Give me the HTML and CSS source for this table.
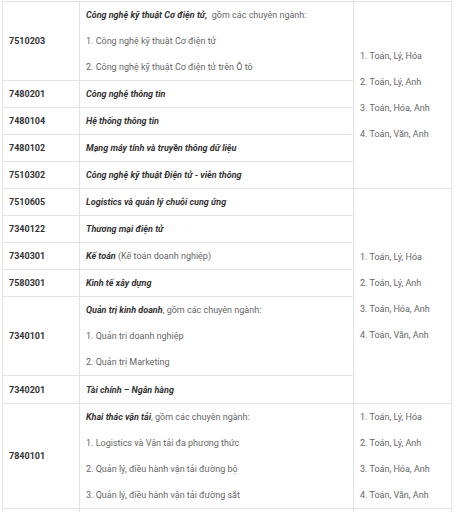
FILE: index.html
```html
<!DOCTYPE html>
<html lang="vi">
<head>
<meta charset="utf-8">
<link rel="stylesheet" href="styles.css">
</head>
<body>
<div class="table">
  <div class="cell c1 code">7510203</div>
  <div class="cell c2">
    <p><b>Công nghệ kỹ thuật Cơ điện tử,</b>&nbsp; gồm các chuyên ngành:</p>
    <p>1. Công nghệ kỹ thuật Cơ điện tử</p>
    <p>2. Công nghệ kỹ thuật Cơ điện tử trên Ô tô</p>
  </div>
  <div class="cell c3 span5">
    <p>1. Toán, Lý, Hóa</p>
    <p>2. Toán, Lý, Anh</p>
    <p>3. Toán, Hóa, Anh</p>
    <p>4. Toán, Văn, Anh</p>
  </div>
  <div class="cell c1 code">7480201</div>
  <div class="cell c2"><p><b>Công nghệ thông tin</b></p></div>
  <div class="cell c1 code">7480104</div>
  <div class="cell c2"><p><b>Hệ thống thông tin</b></p></div>
  <div class="cell c1 code">7480102</div>
  <div class="cell c2"><p><b>Mạng máy tính và truyền thông dữ liệu</b></p></div>
  <div class="cell c1 code">7510302</div>
  <div class="cell c2"><p><b>Công nghệ kỹ thuật Điện tử - viễn thông</b></p></div>

  <div class="cell c1 code">7510605</div>
  <div class="cell c2"><p><b>Logistics và quản lý chuỗi cung ứng</b></p></div>
  <div class="cell c3 span6">
    <p>1. Toán, Lý, Hóa</p>
    <p>2. Toán, Lý, Anh</p>
    <p>3. Toán, Hóa, Anh</p>
    <p>4. Toán, Văn, Anh</p>
  </div>
  <div class="cell c1 code">7340122</div>
  <div class="cell c2"><p><b>Thương mại điện tử</b></p></div>
  <div class="cell c1 code">7340301</div>
  <div class="cell c2"><p><b>Kế toán</b> (Kế toán doanh nghiệp)</p></div>
  <div class="cell c1 code">7580301</div>
  <div class="cell c2"><p><b>Kinh tế xây dựng</b></p></div>
  <div class="cell c1 code">7340101</div>
  <div class="cell c2">
    <p><b>Quản trị kinh doanh</b>, gồm các chuyên ngành:</p>
    <p>1. Quản trị doanh nghiệp</p>
    <p>2. Quản trị Marketing</p>
  </div>
  <div class="cell c1 code">7340201</div>
  <div class="cell c2 tall"><p><b>Tài chính – Ngân hàng</b></p></div>

  <div class="cell c1 code">7840101</div>
  <div class="cell c2">
    <p><b>Khai thác vận tải</b>, gồm các chuyên ngành:</p>
    <p>1. Logistics và Vận tải đa phương thức</p>
    <p>2. Quản lý, điều hành vận tải đường bộ</p>
    <p>3. Quản lý, điều hành vận tải đường sắt</p>
  </div>
  <div class="cell c3">
    <p>1. Toán, Lý, Hóa</p>
    <p>2. Toán, Lý, Anh</p>
    <p>3. Toán, Hóa, Anh</p>
    <p>4. Toán, Văn, Anh</p>
  </div>

  <div class="cell c1 code"><p>&nbsp;</p></div>
  <div class="cell c2"><p>&nbsp;</p></div>
  <div class="cell c3"><p>&nbsp;</p></div>
</div>
</body>
</html>
```

FILE: styles.css
```css
html, body {
  margin: 0;
  padding: 0;
  background: #ffffff;
}

body {
  font-family: Roboto, "Liberation Sans", Arial, sans-serif;
  font-size: 9px;
  color: #666666;
}

.table {
  display: grid;
  grid-template-columns: 77px 274px 98px;
  margin: 1px 0 0 2px;
  border-top: 1px solid #e3e3e3;
  border-left: 1px solid #e3e3e3;
  width: max-content;
}

.cell {
  box-sizing: border-box;
  border-right: 1px solid #e3e3e3;
  border-bottom: 1px solid #e3e3e3;
  padding: 0 6px;
  display: flex;
  flex-direction: column;
  justify-content: center;
}

.c1 { grid-column: 1; }
.c2 { grid-column: 2; }
.c3 { grid-column: 3; }
.span5 { grid-row: span 5; }
.span6 { grid-row: span 6; }

.code {
  font-weight: 700;
  color: #333333;
  min-height: 27px;
}

.tall {
  min-height: 28px;
}

p {
  margin: 0;
  line-height: 26px;
}

b {
  font-weight: 700;
  font-style: italic;
  color: #333333;
}
```
